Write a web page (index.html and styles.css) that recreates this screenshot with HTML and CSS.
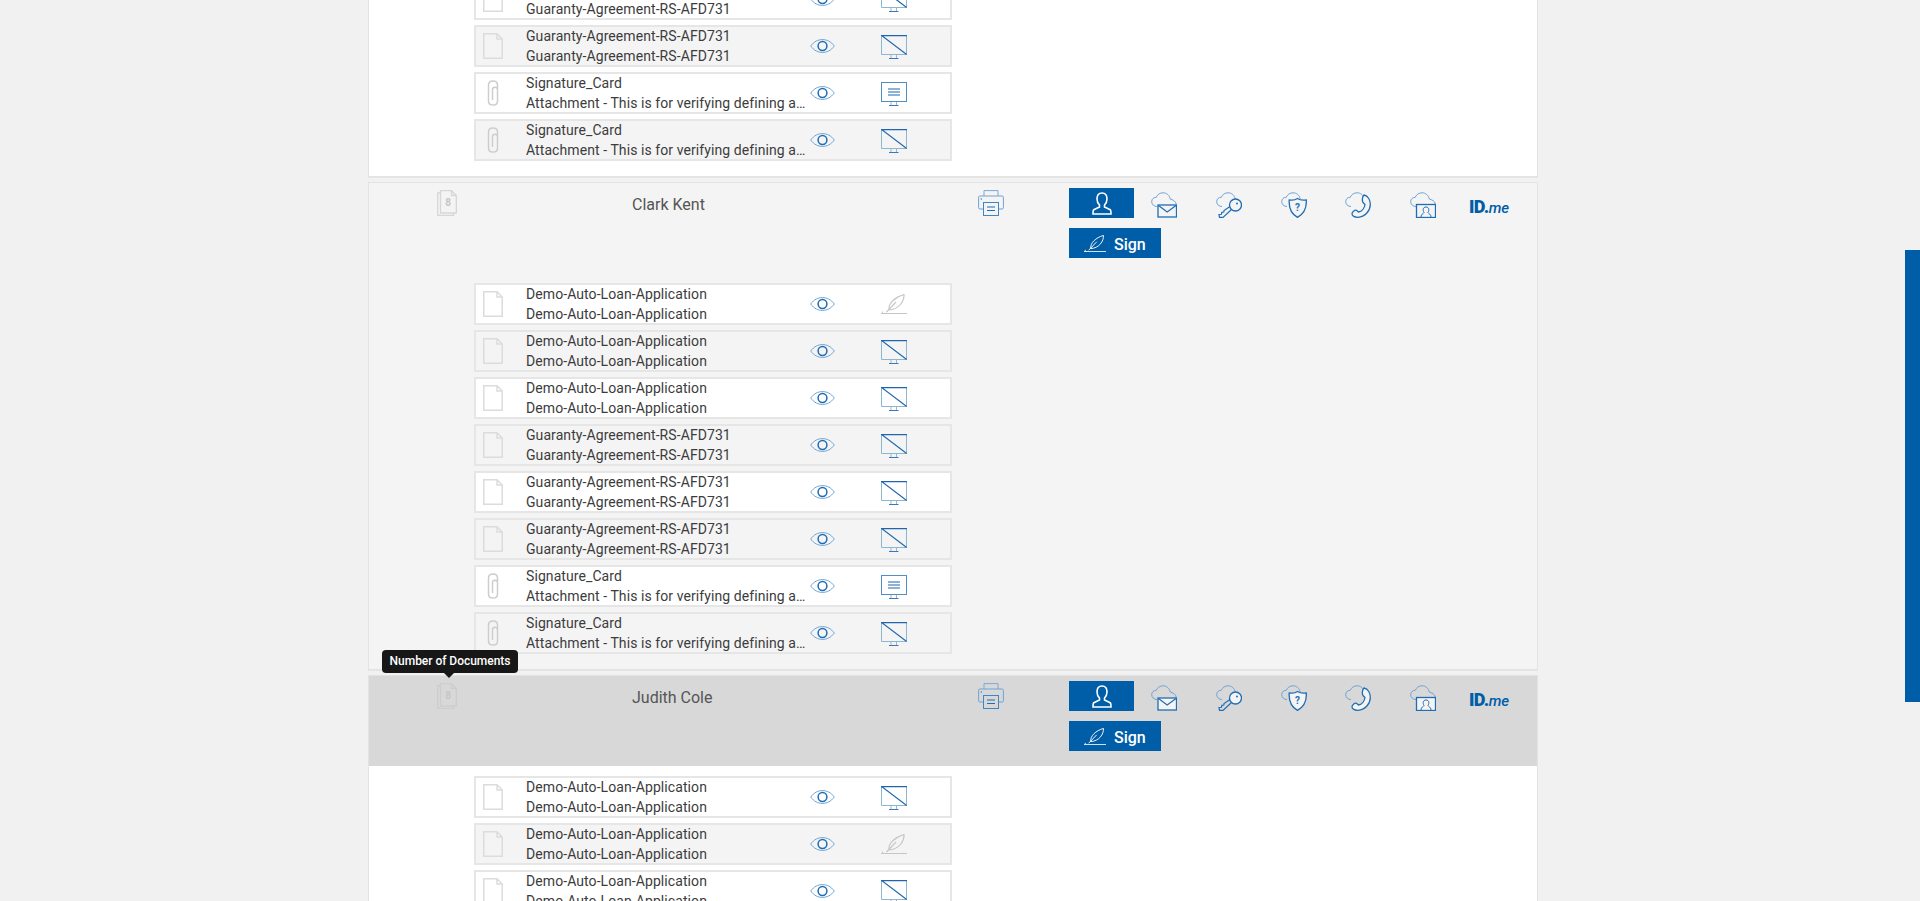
FILE: index.html
```html
<!DOCTYPE html>
<html lang="en">
<head>
<meta charset="utf-8">
<title>Documents</title>
<link rel="stylesheet" href="styles.css">
</head>
<body>
<svg class="sprite" width="0" height="0" aria-hidden="true">
  <defs>
    <symbol id="i-doc" viewBox="0 0 20 26"><path d="M.75.75H14L19.25 6V25.25H.75ZM14 .75V6H19.25" fill="none" stroke="#dcdcdc" stroke-width="1.5"/></symbol>
    <symbol id="i-clip" viewBox="0 0 20 26"><path d="M14.500 8.500V5C14.500 2.300 12.500 .9 10 .9S5.500 2.300 5.500 5V21C5.500 23.700 7.500 25.100 10 25.100S14.500 23.700 14.500 21V9.500C14.500 8 13.300 7.200 12 7.200S9.500 8 9.500 9.500V20" fill="none" stroke="#cdcdcd" stroke-width="1.500"/></symbol>
    <symbol id="i-eye" viewBox="0 0 25 14"><path d="M.7 7C4 2.500 8 .6 12.500 .6S21 2.500 24.300 7C21 11.500 17 13.400 12.500 13.400S4 11.500 .7 7Z" fill="none" stroke="#6ea3d4"/><circle cx="12.500" cy="7" r="4.400" fill="none" stroke="#1f6db5" stroke-width="1.500"/></symbol>
    <symbol id="i-off" viewBox="0 0 26 24"><path d="M.5 19.500V.5M25.500 .5V19.500H.5" fill="none" stroke="#8db7cf"/><path d="M0 .6H26M.3 .3 25.700 19.500" fill="none" stroke="#1f66ad" stroke-width="1.200"/><path d="M10 20V23M15.500 20V23" fill="none" stroke="#9fb2d0"/><path d="M8 23.500H17.500" fill="none" stroke="#3f78b8"/></symbol>
    <symbol id="i-on" viewBox="0 0 26 24"><rect x=".5" y=".5" width="25" height="19" fill="none" stroke="#4f8fc4"/><path d="M7 7H19M7 10H19M7 13H19" fill="none" stroke="#1f66ad" stroke-width="1.200"/><path d="M10 20V23M15.500 20V23" fill="none" stroke="#9fb2d0"/><path d="M8 23.500H17.500" fill="none" stroke="#3f78b8"/></symbol>
    <symbol id="i-pen" viewBox="0 0 26 20"><path d="M8 16C7 9.500 14 3 23 .5C23.500 7 18 15.500 8 16ZM5.500 18 15 8" fill="none" stroke="currentColor" stroke-width="1.100"/><path d="M0 19.500H26M1.500 19.500V17.500" fill="none" stroke="currentColor"/></symbol>
    <symbol id="i-person" viewBox="0 0 20 23"><path d="M10 1C6.500 1 5 4 5 7S6.500 12 7.500 13V15L1.800 17.800C1 18.300 1 21 1 22H19C19 21 19 18.300 18.200 17.800L12.500 15V13C13.500 12 15 10 15 7S13.500 1 10 1Z" fill="none" stroke="#fff" stroke-width="1.600"/></symbol>
    <symbol id="i-print" viewBox="0 0 26 26"><path d="M6 6V.6H20V6" fill="none" stroke="#7aa9d6"/><path d="M5 19H1.800C1 19 .6 18.500 .6 17.800V7.200C.6 6.500 1 6 1.800 6H24.200C25 6 25.400 6.500 25.400 7.200V17.800C25.400 18.500 25 19 24.200 19H21" fill="none" stroke="#6ea3d4"/><rect x="5.500" y="12.500" width="15" height="13" fill="none" stroke="#3f86c6"/><path d="M9 17H17M9 20.500H17" fill="none" stroke="#1f6db5" stroke-width="1.200"/><circle cx="3.300" cy="9" r=".8" fill="#3f86c6"/></symbol>
    <path id="cloud" d="M6 14.500C3 14.500 .7 12.500 .7 9.700S2.700 5.300 5.300 5.300C6.300 2.500 9 .8 12 .8C15.800 .8 18.500 3.300 19.200 7" fill="none" stroke="#6ea3d4"/>
    <symbol id="i-mail" viewBox="0 0 26 26"><use href="#cloud"/><path d="M19.200 7C21.500 7.600 25 9 25.300 12.500" fill="none" stroke="#6ea3d4"/><rect x="7" y="13" width="18.500" height="12" fill="#f4f4f4" stroke="#1f6db5" stroke-width="1.300"/><path d="M7.500 13.500 16.200 20 25 13.500" fill="none" stroke="#1f6db5" stroke-width="1.200"/></symbol>
    <symbol id="i-key" viewBox="0 0 26 26"><use href="#cloud"/><circle cx="19.500" cy="13" r="6" fill="#f4f4f4" stroke="#1f6db5" stroke-width="1.300"/><circle cx="21" cy="11.500" r="1" fill="#1f6db5"/><path d="M15.500 17.500 7 25.400H3.500L3 22.500 5.500 22.300 5.800 20.300 7.800 20 8 18.500 14 14.500" fill="none" stroke="#1f6db5" stroke-width="1.200"/></symbol>
    <symbol id="i-shield" viewBox="0 0 26 26"><use href="#cloud"/><path d="M16.500 6.500C18.500 8 21.500 8.500 25.300 8C25.800 16 22.500 22 16.500 25.400C10.500 22 7.700 16 8.200 8C11.500 8.500 14.500 8 16.500 6.500Z" fill="#f4f4f4" stroke="#1f6db5" stroke-width="1.300"/><text x="16.500" y="18.500" class="icon-mark" text-anchor="middle">?</text></symbol>
    <symbol id="i-phone" viewBox="0 0 26 26"><use href="#cloud"/><path d="M19 3C23 4 25.500 8 25.300 13C25 19 20 25 13 25.300C9.500 25.400 7 24 7 21.800C7 20 9.500 17.800 11.500 18.300L13.500 20C17 19.500 19.500 16 20 12.500L18 10.500C17 9 17 5 19 3Z" fill="#f4f4f4" stroke="#1f6db5" stroke-width="1.300"/></symbol>
    <symbol id="i-contact" viewBox="0 0 26 26"><use href="#cloud"/><path d="M19.200 7C21.500 7.600 25 9 25.300 12" fill="none" stroke="#6ea3d4"/><rect x="6.500" y="12.500" width="19" height="13" fill="#f4f4f4" stroke="#1f6db5" stroke-width="1.300"/><path d="M11 25C11 22 13.500 21.800 14 20.500C12.500 18 13 15 16 15S19.500 18 18 20.500C18.500 21.800 21 22 21 25" fill="none" stroke="#1f6db5"/></symbol>
    <symbol id="i-stack" viewBox="0 0 20 26"><path d="M3.500 .7H14.500L19.300 5.500V23H3.500ZM14.500 .7V5.500H19.300M3.500 3H.7V25.300H16.500V23" fill="none" stroke="currentColor" stroke-width="1.300"/><text x="11.200" y="15.500" class="icon-count" text-anchor="middle">8</text></symbol>
  </defs>
</svg>

<main class="page">
  <section class="panel panel-open">
    <div class="docs">
      <div class="doc"><svg class="doc-type"><use href="#i-doc"/></svg><div class="doc-text"><p>Guaranty-Agreement-RS-AFD731</p><p>Guaranty-Agreement-RS-AFD731</p></div><svg class="eye"><use href="#i-eye"/></svg><svg class="state"><use href="#i-off"/></svg></div>
      <div class="doc"><svg class="doc-type"><use href="#i-doc"/></svg><div class="doc-text"><p>Guaranty-Agreement-RS-AFD731</p><p>Guaranty-Agreement-RS-AFD731</p></div><svg class="eye"><use href="#i-eye"/></svg><svg class="state"><use href="#i-off"/></svg></div>
      <div class="doc"><svg class="doc-type"><use href="#i-clip"/></svg><div class="doc-text"><p>Signature_Card</p><p>Attachment - This is for verifying defining attachment details</p></div><svg class="eye"><use href="#i-eye"/></svg><svg class="state"><use href="#i-on"/></svg></div>
      <div class="doc"><svg class="doc-type"><use href="#i-clip"/></svg><div class="doc-text"><p>Signature_Card</p><p>Attachment - This is for verifying defining attachment details</p></div><svg class="eye"><use href="#i-eye"/></svg><svg class="state"><use href="#i-off"/></svg></div>
    </div>
  </section>

  <section class="panel panel-muted">
    <header class="signer">
      <svg class="stack"><use href="#i-stack"/></svg>
      <h2 class="signer-name">Clark Kent</h2>
      <svg class="print"><use href="#i-print"/></svg>
      <div class="actions">
        <div class="action-row">
          <button class="btn btn-person" type="button"><svg class="person"><use href="#i-person"/></svg></button>
          <svg class="auth"><use href="#i-mail"/></svg>
          <svg class="auth"><use href="#i-key"/></svg>
          <svg class="auth"><use href="#i-shield"/></svg>
          <svg class="auth"><use href="#i-phone"/></svg>
          <svg class="auth"><use href="#i-contact"/></svg>
          <span class="idme">ID.<em>me</em></span>
        </div>
        <button class="btn btn-sign" type="button"><svg class="pen"><use href="#i-pen"/></svg><span class="btn-label">Sign</span></button>
      </div>
    </header>
    <div class="docs">
      <div class="doc"><svg class="doc-type"><use href="#i-doc"/></svg><div class="doc-text"><p>Demo-Auto-Loan-Application</p><p>Demo-Auto-Loan-Application</p></div><svg class="eye"><use href="#i-eye"/></svg><svg class="state state-pen"><use href="#i-pen"/></svg></div>
      <div class="doc"><svg class="doc-type"><use href="#i-doc"/></svg><div class="doc-text"><p>Demo-Auto-Loan-Application</p><p>Demo-Auto-Loan-Application</p></div><svg class="eye"><use href="#i-eye"/></svg><svg class="state"><use href="#i-off"/></svg></div>
      <div class="doc"><svg class="doc-type"><use href="#i-doc"/></svg><div class="doc-text"><p>Demo-Auto-Loan-Application</p><p>Demo-Auto-Loan-Application</p></div><svg class="eye"><use href="#i-eye"/></svg><svg class="state"><use href="#i-off"/></svg></div>
      <div class="doc"><svg class="doc-type"><use href="#i-doc"/></svg><div class="doc-text"><p>Guaranty-Agreement-RS-AFD731</p><p>Guaranty-Agreement-RS-AFD731</p></div><svg class="eye"><use href="#i-eye"/></svg><svg class="state"><use href="#i-off"/></svg></div>
      <div class="doc"><svg class="doc-type"><use href="#i-doc"/></svg><div class="doc-text"><p>Guaranty-Agreement-RS-AFD731</p><p>Guaranty-Agreement-RS-AFD731</p></div><svg class="eye"><use href="#i-eye"/></svg><svg class="state"><use href="#i-off"/></svg></div>
      <div class="doc"><svg class="doc-type"><use href="#i-doc"/></svg><div class="doc-text"><p>Guaranty-Agreement-RS-AFD731</p><p>Guaranty-Agreement-RS-AFD731</p></div><svg class="eye"><use href="#i-eye"/></svg><svg class="state"><use href="#i-off"/></svg></div>
      <div class="doc"><svg class="doc-type"><use href="#i-clip"/></svg><div class="doc-text"><p>Signature_Card</p><p>Attachment - This is for verifying defining attachment details</p></div><svg class="eye"><use href="#i-eye"/></svg><svg class="state"><use href="#i-on"/></svg></div>
      <div class="doc"><svg class="doc-type"><use href="#i-clip"/></svg><div class="doc-text"><p>Signature_Card</p><p>Attachment - This is for verifying defining attachment details</p></div><svg class="eye"><use href="#i-eye"/></svg><svg class="state"><use href="#i-off"/></svg></div>
    </div>
  </section>

  <section class="panel panel-open panel-hover">
    <div class="tooltip">Number of Documents</div>
    <header class="signer signer-active">
      <svg class="stack"><use href="#i-stack"/></svg>
      <h2 class="signer-name">Judith Cole</h2>
      <svg class="print"><use href="#i-print"/></svg>
      <div class="actions">
        <div class="action-row">
          <button class="btn btn-person" type="button"><svg class="person"><use href="#i-person"/></svg></button>
          <svg class="auth"><use href="#i-mail"/></svg>
          <svg class="auth"><use href="#i-key"/></svg>
          <svg class="auth"><use href="#i-shield"/></svg>
          <svg class="auth"><use href="#i-phone"/></svg>
          <svg class="auth"><use href="#i-contact"/></svg>
          <span class="idme">ID.<em>me</em></span>
        </div>
        <button class="btn btn-sign" type="button"><svg class="pen"><use href="#i-pen"/></svg><span class="btn-label">Sign</span></button>
      </div>
    </header>
    <div class="docs">
      <div class="doc"><svg class="doc-type"><use href="#i-doc"/></svg><div class="doc-text"><p>Demo-Auto-Loan-Application</p><p>Demo-Auto-Loan-Application</p></div><svg class="eye"><use href="#i-eye"/></svg><svg class="state"><use href="#i-off"/></svg></div>
      <div class="doc"><svg class="doc-type"><use href="#i-doc"/></svg><div class="doc-text"><p>Demo-Auto-Loan-Application</p><p>Demo-Auto-Loan-Application</p></div><svg class="eye"><use href="#i-eye"/></svg><svg class="state state-pen"><use href="#i-pen"/></svg></div>
      <div class="doc"><svg class="doc-type"><use href="#i-doc"/></svg><div class="doc-text"><p>Demo-Auto-Loan-Application</p><p>Demo-Auto-Loan-Application</p></div><svg class="eye"><use href="#i-eye"/></svg><svg class="state"><use href="#i-off"/></svg></div>
    </div>
  </section>
</main>
<div class="scroll-thumb"></div>
</body>
</html>
```

FILE: styles.css
```css
* { box-sizing: border-box; }

html, body {
  height: 901px;
  margin: 0;
  overflow: hidden;
}

body {
  background: #f1f1f1;
  color: #3c3c3c;
  font-family: Roboto, "Liberation Sans", sans-serif;
  font-size: 14px;
}

.sprite { position: absolute; }

.page {
  display: flex;
  flex-direction: column;
  gap: 5px;
  width: 1170px;
  margin: -40px 0 0 368px;
}

.panel {
  position: relative;
  border: 1px solid #e3e3e3;
  box-shadow: 0 1px 0 #e6e6e6;
  padding-bottom: 15px;
}

.panel-open { background: #fff; }
.panel-muted { background: #f4f4f4; }
.panel-open:first-child { padding-top: 17px; }

.signer {
  display: flex;
  align-items: flex-start;
  height: 90px;
  margin-bottom: 10px;
  padding-top: 5px;
  color: #d6d6d6;
}

.signer-active { background: #d8d8d8; color: #cdcdcd; }

.stack { width: 20px; height: 26px; margin: 2px 0 0 68px; flex: none; }
.icon-count { font: 700 10px Roboto, sans-serif; fill: #c6c6c6; }
.icon-mark { font: 700 10px Roboto, sans-serif; fill: #1f6db5; }

.signer-name {
  width: 346px;
  margin: 7px 0 0 175px;
  flex: none;
  color: #555;
  font-size: 16px;
  font-weight: 400;
  line-height: 20px;
}

.print { width: 26px; height: 26px; margin-top: 2px; flex: none; }

.actions {
  display: flex;
  flex-direction: column;
  align-items: flex-start;
  gap: 10px;
  margin-left: 65px;
}

.action-row { display: flex; align-items: flex-start; }

.btn {
  display: flex;
  align-items: center;
  height: 30px;
  padding: 0;
  border: 0;
  background: #005da8;
  color: #fff;
  font-family: inherit;
}

.btn-person { justify-content: center; width: 65px; }
.person { width: 20px; height: 23px; }

.btn-sign {
  width: 92px;
  padding-left: 15px;
  gap: 8px;
  font-size: 16px;
  font-weight: 500;
}

.btn-label { padding-top: 3px; }

.pen { width: 22px; height: 17px; }

.auth { width: 26px; height: 26px; margin: 4px 0 0 17px; flex: none; }
.auth + .auth { margin-left: 38.75px; }

.idme {
  margin: 9px 0 0 33px;
  color: #005da8;
  font-size: 18px;
  font-weight: 900;
  line-height: 20px;
  letter-spacing: -.6px;
}

.idme em { font-size: 15px; font-weight: 500; letter-spacing: 0; }

.docs {
  display: flex;
  flex-direction: column;
  gap: 5px;
  margin-left: 105px;
}

.doc {
  display: flex;
  align-items: center;
  width: 478px;
  height: 42px;
  border: 2px solid #e6e6e6;
  background: #fff;
}

.doc:nth-child(even) { background: #f4f4f4; }

.doc-type { width: 20px; height: 26px; margin-left: 7px; flex: none; }

.doc-text {
  width: 280px;
  margin-left: 23px;
  flex: none;
  line-height: 20px;
  letter-spacing: .08px;
}

.doc-text p {
  margin: 0;
  overflow: hidden;
  white-space: nowrap;
  text-overflow: ellipsis;
}

.eye { width: 25px; height: 14px; margin-left: 4px; flex: none; }
.state { width: 26px; height: 24px; margin: 2px 0 0 46px; flex: none; }
.state-pen { height: 20px; margin-top: 0; color: #c6c6c6; }

.tooltip {
  position: absolute;
  top: -26px;
  left: 13px;
  z-index: 2;
  width: 136px;
  height: 23px;
  border-radius: 4px;
  background: #171717;
  color: #fff;
  font-size: 12px;
  font-weight: 500;
  line-height: 22px;
  text-align: center;
  letter-spacing: -.03px;
}

.tooltip::after {
  content: "";
  position: absolute;
  left: 62px;
  top: 23px;
  border: 5px solid transparent;
  border-top-color: #171717;
  border-bottom: 0;
}

.scroll-thumb {
  position: fixed;
  top: 250px;
  right: 0;
  width: 15px;
  height: 452px;
  background: #005da8;
}
```
